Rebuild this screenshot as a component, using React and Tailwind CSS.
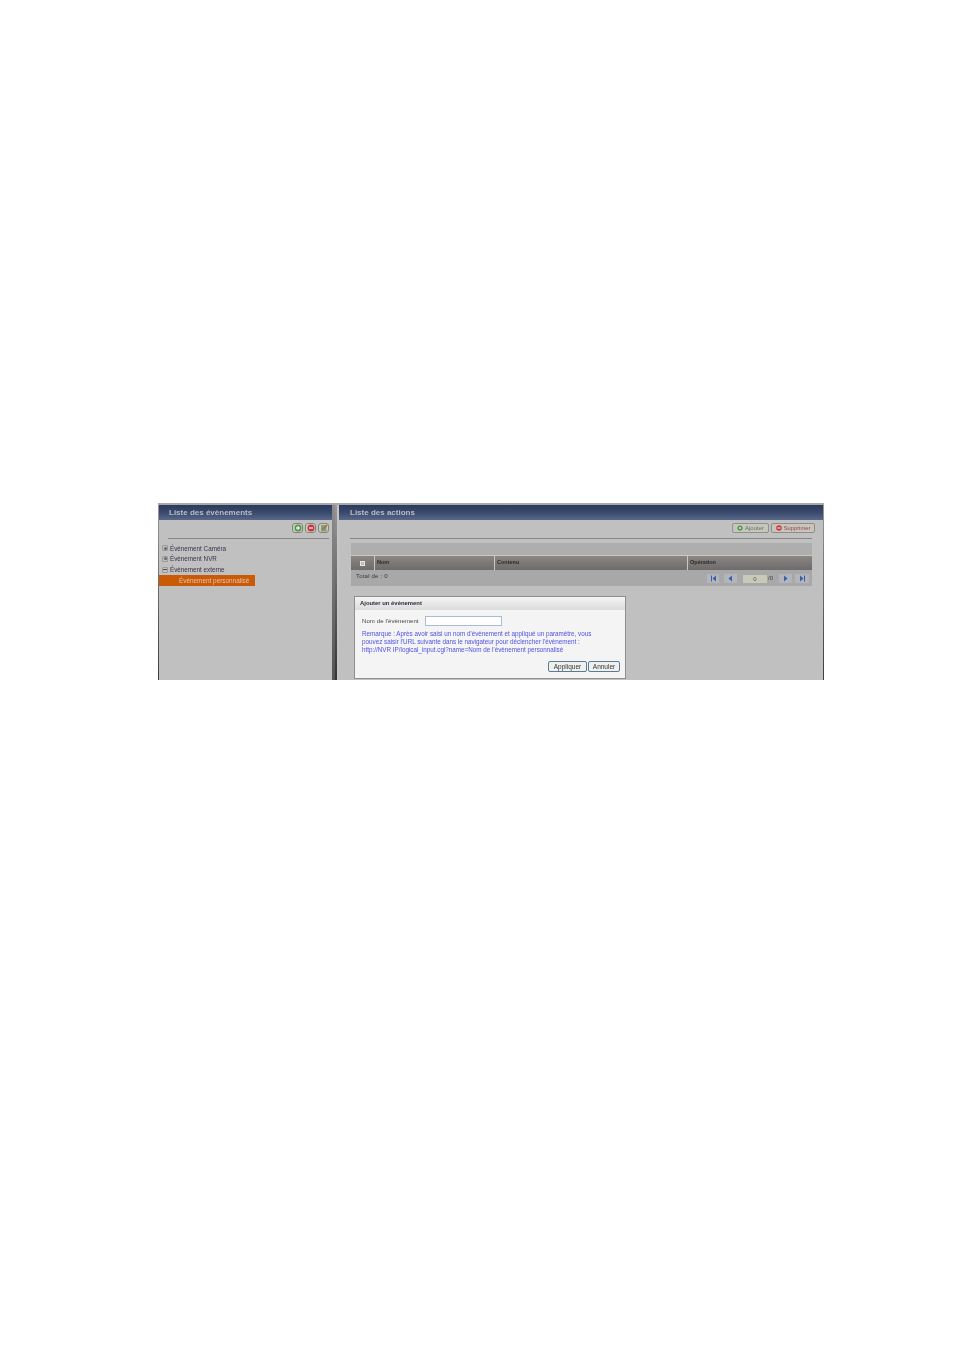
const font = { fontFamily: '"Liberation Sans", Arial, sans-serif' };

const Title = ({ children, pad = "pl-[10px]" }) => (
  <div className={`h-[15px] bg-gradient-to-b from-[#2a3a5e] via-[#3a4a6c] to-[#5a698a] text-[8px] leading-[15px] font-bold text-[#b9bdc6] ${pad}`}>
    {children}
  </div>
);

const TreeRow = ({ sign, children }) => (
  <div className="flex h-[10.67px] items-center">
    <span className="ml-[3px] flex h-[6px] w-[6px] items-center justify-center rounded-[1px] border border-[#999] leading-none">
      {sign === "plus" ? <span className="h-[3px] w-[3px] rounded-full bg-[#666]" /> : <span className="h-px w-[4px] bg-[#555]" />}
    </span>
    <span className="ml-[2px] text-[6.3px] text-[#38304a]">{children}</span>
  </div>
);

const ToolBtn = ({ children }) => (
  <span className="flex h-[10px] w-[11px] items-center justify-center rounded-[3px] border border-[#85857c] bg-[#cbcbc0]">
    {children}
  </span>
);

const Nav = ({ d, className }) => (
  <span className={`flex h-[9px] items-center justify-center bg-[#b2b6bc] ${className}`}>
    <svg width="7" height="7" viewBox="0 0 7 7">
      <path d={d} fill="#3a5fa8" />
    </svg>
  </span>
);

const Head = ({ children }) => (
  <div className="border-l border-[#c9c9c0] pl-[2px] text-[5.5px] leading-[13px] font-bold text-[#2e2a2a]">{children}</div>
);

export default function App() {
  return (
    <div className="h-[1350px] w-[954px] bg-white pt-[503px] pl-[158px]" style={font}>
      <div className="flex h-[177px] w-[666px] overflow-hidden border-t-2 border-t-[#a9a9a9] bg-[#c0c0c0] blur-[0.4px]">
        <div className="w-px bg-gradient-to-b from-[#9a9a9a] to-[#3c3c3c]" />
        {/* left panel */}
        <div className="w-[173px]">
          <Title>Liste des évènements</Title>
          <div className="mr-[3px] ml-[9px] flex h-[19px] items-start justify-end gap-[2px] border-b border-[#858585] pt-[3px]">
            <ToolBtn>
              <svg width="8" height="8" viewBox="0 0 8 8">
                <circle cx="4" cy="4" r="3.5" fill="#4c9c4c" />
                <path d="M4 2v4M2 4h4" stroke="#e4efe0" strokeWidth="1.3" />
              </svg>
            </ToolBtn>
            <ToolBtn>
              <svg width="8" height="8" viewBox="0 0 8 8">
                <circle cx="4" cy="4" r="3.5" fill="#c23a3e" />
                <path d="M2 4h4" stroke="#f0dcdc" strokeWidth="1.4" />
              </svg>
            </ToolBtn>
            <ToolBtn>
              <svg width="8" height="8" viewBox="0 0 8 8">
                <rect x="1" y="1" width="5.5" height="6.5" fill="#8c9a78" />
                <path d="M2.5 5.5 L7 1" stroke="#a8702c" strokeWidth="1.4" />
              </svg>
            </ToolBtn>
          </div>
          <div className="pt-[4px]">
            <TreeRow sign="plus">Évènement Caméra</TreeRow>
            <TreeRow sign="plus">Évènement NVR</TreeRow>
            <TreeRow sign="minus">Évènement externe</TreeRow>
            <div className="flex h-[11px] w-[96px] items-center bg-[#c85a08] text-[6.4px] text-[#e8c4a8]">
              <span className="mr-[5px] ml-[14px] h-px w-px" />
              Évènement personnalisé
            </div>
          </div>
        </div>
        {/* divider */}
        <div className="w-[3px] bg-gradient-to-b from-[#8c8c8c] to-[#555555]" />
        <div className="w-[2px] bg-gradient-to-b from-[#999999] to-[#333333]" />
        <div className="w-[2px] bg-[#c4c4c4]" />
        {/* right panel */}
        <div className="flex w-[484px] flex-col">
          <Title pad="pl-[11px]">Liste des actions</Title>
          <div className="flex h-[13px] items-end justify-end gap-[2px] pr-[8px]">
            <span className="flex h-[10px] w-[37px] items-center justify-center gap-[2px] rounded-[2px] border border-[#8f948a] bg-[#c6c6be] text-[6px] text-[#5f7a5f]">
              <svg width="6" height="6" viewBox="0 0 6 6">
                <circle cx="3" cy="3" r="2.6" fill="#4c9a4c" />
                <circle cx="3" cy="3" r="1" fill="#dbe8d6" />
              </svg>
              Ajouter
            </span>
            <span className="flex h-[10px] w-[44px] items-center justify-center gap-[2px] rounded-[2px] border border-[#948a8a] bg-[#c6c6be] text-[5.8px] text-[#a04050]">
              <svg width="6" height="6" viewBox="0 0 6 6">
                <circle cx="3" cy="3" r="2.8" fill="#c8383c" />
                <path d="M1.3 3h3.4" stroke="#f0dcdc" strokeWidth="1.1" />
              </svg>
              Supprimer
            </span>
          </div>
          <div className="mx-[11px] mt-[5px] h-px bg-[#858585]" />
          <div className="mt-[4px] ml-[12px] w-[461px]">
            <div className="h-[12px] bg-[#aeaeae]" />
            <div className="grid h-[15px] grid-cols-[23px_120px_193px_125px] border-t border-[#c9c9c0] bg-gradient-to-b from-[#8a8684] to-[#6f6b6a]">
              <div className="flex items-center justify-center">
                <span className="h-[5px] w-[5px] border border-[#e6e6e6] bg-[#bbb]" />
              </div>
              <Head>Nom</Head>
              <Head>Contenu</Head>
              <Head>Opération</Head>
            </div>
            <div className="flex h-[16px] justify-between bg-[#a8a8a8] pt-[4px] pr-[3px] pl-[5px]">
              <span className="text-[6px] leading-[5px] tracking-[0.2px] text-[#3d3540]">Total de : 0</span>
              <div className="flex h-[9px] items-center">
                <Nav className="w-[12px]" d="M1 0.5h1v6H1z M6 0.5v6L2.5 3.5z" />
                <Nav className="ml-[5px] w-[13px]" d="M5 0.5v6L1.5 3.5z" />
                <span className="ml-[6px] h-[8px] w-[24px] bg-[#c9c9b8] text-center text-[6px] leading-[8px] text-[#555]">0</span>
                <span className="ml-px w-[6px] text-[6px] text-[#444]">/0</span>
                <Nav className="ml-[5px] w-[13px]" d="M2 0.5v6L5.5 3.5z" />
                <Nav className="ml-[3px] w-[14px]" d="M6 0.5H5v6h1z M1 0.5v6L4.5 3.5z" />
              </div>
            </div>
          </div>
          {/* add event dialog */}
          <div className="mt-[10px] ml-[15px] h-[83px] w-[272px] overflow-hidden border border-[#8f8f8f] bg-[#f4f4f4]">
            <div className="h-[13px] bg-gradient-to-b from-[#f4f4f4] to-[#dcdcdc] pl-[5px] text-[5.9px] leading-[13px] font-bold text-[#2a2a3a]">
              Ajouter un évènement
            </div>
            <div className="mt-[6px] flex h-[10px] items-center pl-[7px]">
              <span className="w-[63px] text-[6px] tracking-[0.1px] text-[#444]">Nom de l'évènement</span>
              <span className="h-[10px] w-[77px] border border-[#a9bcd4] bg-white" />
            </div>
            <div className="mt-[4px] pl-[7px] text-[6.3px] leading-[8px] text-[#5050e8]">
              Remarque : Après avoir saisi un nom d'évènement et appliqué un paramètre, vous
              <br />
              pouvez saisir l'URL suivante dans le navigateur pour déclencher l'évènement :
              <br />
              http://NVR IP/logical_input.cgi?name=Nom de l'évènement personnalisé
            </div>
            <div className="mt-[7px] flex justify-end gap-[1px] pr-[5px]">
              <span className="h-[11px] w-[39px] rounded-[2px] border border-[#5a7a96] bg-[#f0f0ec] text-center text-[6.5px] leading-[10px] text-[#333]">
                Appliquer
              </span>
              <span className="h-[11px] w-[32px] rounded-[2px] border border-[#5a7a96] bg-[#f0f0ec] text-center text-[6.5px] leading-[10px] text-[#333]">
                Annuler
              </span>
            </div>
          </div>
        </div>
        <div className="w-px bg-gradient-to-b from-[#9a9a9a] to-[#3c3c3c]" />
      </div>
    </div>
  );
}
